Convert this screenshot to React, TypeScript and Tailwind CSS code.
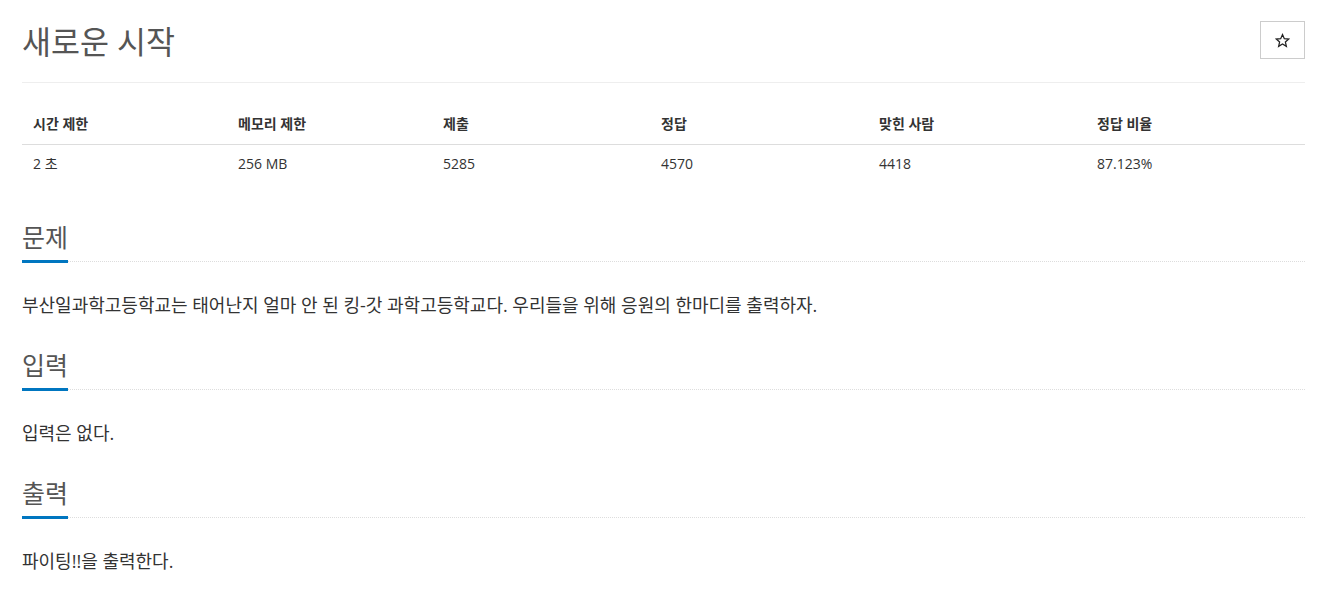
import React from "react";

const font = { fontFamily: '"Open Sans", "Noto Sans CJK KR", sans-serif' };

function Section({ title, first, children }: { title: string; first?: boolean; children: React.ReactNode }) {
  return (
    <section className={first ? "mt-[38px]" : "mt-[31px]"}>
      <div className="relative border-b border-dotted border-[#ddd] pb-[8px]">
        <h2 className="text-[25px] leading-[32px] text-[#555] font-normal">{title}</h2>
        <div className="absolute left-0 bottom-[-2px] h-[3px] w-[46px] bg-[#0076c0]" />
      </div>
      <p className="mt-[30px] text-[18px] leading-[26px] text-[#333]">{children}</p>
    </section>
  );
}

export default function App() {
  const headers = ["시간 제한", "메모리 제한", "제출", "정답", "맞힌 사람", "정답 비율"];
  const values = ["2 초", "256 MB", "5285", "4570", "4418", "87.123%"];
  const cols = "grid grid-cols-[205px_205px_218px_218px_218px_1fr]";
  return (
    <div className="bg-white w-[1327px] min-h-[593px] px-[22px]" style={font}>
      <div className="flex items-start justify-between pt-[20px] pb-[18px] border-b border-[#eee]">
        <h1 className="text-[31.5px] leading-[44px] text-[#555] font-normal">새로운 시작</h1>
        <button className="mt-[1px] w-[45px] h-[38px] border border-[#ccc] bg-white flex items-center justify-center text-[14px] text-[#333]">
          <svg width="15" height="15" viewBox="0 0 24 24" fill="none" stroke="#222" strokeWidth="2" strokeLinejoin="miter">
            <path d="M12 2.5l2.9 6.6 7.1.6-5.4 4.7 1.6 7-6.2-3.7-6.2 3.7 1.6-7L2 9.7l7.1-.6z" />
          </svg>
        </button>
      </div>
      <div className="mt-[21px] text-[14px] text-[#333]">
        <div className={`${cols} border-b border-[#ddd] font-bold`}>
          {headers.map((h) => (
            <div key={h} className="pl-[11px] py-[10px] leading-[20px]">{h}</div>
          ))}
        </div>
        <div className={cols}>
          {values.map((v) => (
            <div key={v} className="pl-[11px] py-[9px] leading-[20px]">{v}</div>
          ))}
        </div>
      </div>
      <Section first title="문제">부산일과학고등학교는 태어난지 얼마 안 된 킹-갓 과학고등학교다. 우리들을 위해 응원의 한마디를 출력하자.</Section>
      <Section title="입력">입력은 없다.</Section>
      <Section title="출력">파이팅!!을 출력한다.</Section>
    </div>
  );
}
